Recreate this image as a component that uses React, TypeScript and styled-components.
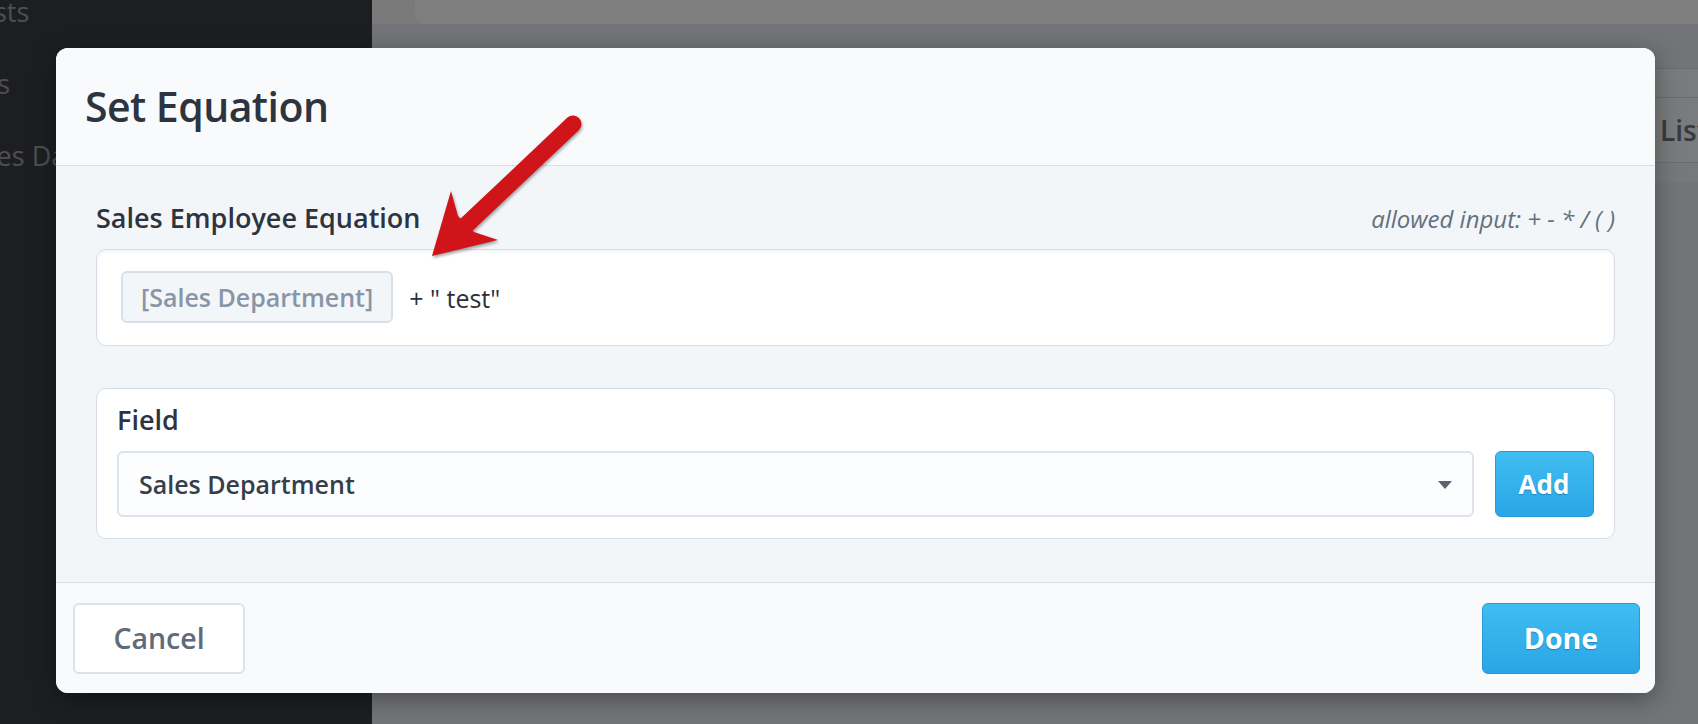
import React from "react";
import styled, { createGlobalStyle } from "styled-components";

const GlobalStyle = createGlobalStyle`
  html, body { margin: 0; padding: 0; }
  body {
    font-family: "Open Sans", "Noto Sans", Arial, sans-serif;
    width: 1698px;
    height: 724px;
    overflow: hidden;
  }
  * { box-sizing: border-box; }
`;

const Page = styled.div`
  position: relative;
  width: 1698px;
  height: 724px;
  display: flex;
  overflow: hidden;
`;

const Sidebar = styled.nav`
  width: 372px;
  flex: 0 0 372px;
  background: #3a3c42;
  display: flex;
  flex-direction: column;
  gap: 38px;
  margin-top: -5px;
  overflow: hidden;
`;

const SideItem = styled.div<{ $shift: number }>`
  font-size: 27px;
  line-height: 34px;
  color: #9c9ea5;
  white-space: nowrap;
  margin-left: ${(p) => -p.$shift}px;
`;

const Main = styled.main`
  flex: 1;
  background: #e6e9ee;
  display: flex;
  flex-direction: column;
  overflow: hidden;
`;

const TopBar = styled.div`
  height: 24px;
  background: #f4f4f4;
  padding-left: 43px;
  display: flex;
`;

const TopCard = styled.div`
  flex: 1;
  background: #ffffff;
  border-radius: 0 0 0 10px;
`;

const Panel = styled.section`
  margin-top: 44px;
  background: #f5f6f8;
  display: flex;
  flex-direction: column;
  border-top: 1px solid #d5d9df;
`;

const PanelStrip = styled.div`
  height: 29px;
  border-bottom: 1px solid #d5d9df;
`;

const PanelToolbar = styled.div`
  height: 65px;
  display: flex;
  align-items: center;
  border-bottom: 1px solid #d5d9df;
`;

const ToolbarSpacer = styled.div`
  flex: 0 0 1288px;
`;

const ToolbarText = styled.span`
  font-size: 28px;
  font-weight: 600;
  color: #70757e;
  white-space: nowrap;
`;

const PanelFoot = styled.div`
  height: 20px;
  background: #eef0f3;
`;

const Overlay = styled.div`
  position: absolute;
  inset: 0;
  background: rgba(0, 0, 0, 0.5);
  display: flex;
  align-items: flex-start;
  padding: 48px 43px 0 56px;
`;

const Modal = styled.div`
  width: 1600px;
  border-radius: 12px;
  overflow: hidden;
  background: #f9fafc;
  box-shadow: 0 6px 24px rgba(0, 0, 0, 0.35);
  display: flex;
  flex-direction: column;
`;

const Header = styled.header`
  height: 117.5px;
  border-bottom: 1.5px solid #d8dfe7;
  background: #f9fafc;
  display: flex;
  align-items: center;
  padding-left: 29px;
`;

const Title = styled.h1`
  margin: 0;
  font-size: 41px;
  line-height: 50px;
  font-weight: 600;
  color: #2d3440;
  letter-spacing: -0.55px;
`;

const Body = styled.div`
  background: #f3f6f9;
  padding: 35px 40px 43px 40px;
  display: flex;
  flex-direction: column;
`;

const LabelRow = styled.div`
  height: 34px;
  display: flex;
  justify-content: space-between;
  align-items: baseline;
  margin-bottom: 14px;
`;

const Label = styled.div`
  font-size: 27px;
  line-height: 34px;
  font-weight: 600;
  color: #2d3440;
`;

const Hint = styled.span`
  font-size: 24px;
  line-height: 34px;
  font-style: italic;
  color: #64707e;
`;

const EquationBox = styled.div`
  height: 97px;
  background: #ffffff;
  border: 1.5px solid #d6dde6;
  border-radius: 10px;
  box-shadow: inset 0 2px 3px rgba(20, 40, 70, 0.05);
  display: flex;
  align-items: center;
  padding-left: 24px;
  gap: 16px;
`;

const Token = styled.span`
  height: 52px;
  display: inline-flex;
  align-items: center;
  padding: 0 18px;
  background: #f3f6f9;
  border: 2px solid #d8dfe7;
  border-radius: 6px;
  font-size: 25px;
  font-weight: 600;
  color: #8795a6;
`;

const EqText = styled.span`
  font-size: 25px;
  color: #2b313a;
  white-space: pre;
  margin-top: 2px;
`;

const FieldCard = styled.div`
  margin-top: 42px;
  height: 151px;
  background: #ffffff;
  border: 1.5px solid #d6dde6;
  border-radius: 10px;
  padding: 14px 20.5px 0 20px;
  display: flex;
  flex-direction: column;
`;

const FieldLabel = styled(Label)`
  margin-bottom: 14px;
`;

const FieldRow = styled.div`
  display: flex;
  gap: 21px;
`;

const Select = styled.div`
  flex: 1;
  height: 66px;
  background: #fcfdfe;
  border: 2px solid #dde3ea;
  border-radius: 6px;
  display: flex;
  align-items: center;
  justify-content: space-between;
  padding: 0 20px 0 20px;
  font-size: 25px;
  font-weight: 600;
  color: #363e4a;
`;

const Caret = styled.span`
  width: 0;
  height: 0;
  border-left: 7.5px solid transparent;
  border-right: 7.5px solid transparent;
  border-top: 8px solid #5b6270;
  margin-top: 2px;
`;

const BlueButton = styled.button<{ $w: number; $h: number; $fs: number }>`
  width: ${(p) => p.$w}px;
  height: ${(p) => p.$h}px;
  flex: 0 0 auto;
  background: linear-gradient(#40bdf1, #2aa5e6);
  border: 1.5px solid #2a9ad7;
  border-radius: 6px;
  color: #ffffff;
  font-family: "Open Sans", "Noto Sans", Arial, sans-serif;
  font-size: ${(p) => p.$fs}px;
  font-weight: 700;
  text-shadow: 0 1px 1px rgba(0, 60, 110, 0.35);
  display: flex;
  align-items: center;
  justify-content: center;
  padding: 0;
  cursor: pointer;
`;

const Footer = styled.footer`
  background: #f9fafc;
  border-top: 1.5px solid #d8dfe7;
  padding: 20px 15px 19px 17px;
  display: flex;
  justify-content: space-between;
  align-items: center;
`;

const GhostButton = styled.button`
  width: 172px;
  height: 71px;
  background: #ffffff;
  border: 2px solid #dbe2ea;
  border-radius: 6px;
  color: #5f6b7a;
  font-family: "Open Sans", "Noto Sans", Arial, sans-serif;
  font-size: 28.5px;
  font-weight: 600;
  padding: 0;
  cursor: pointer;
`;

const ArrowLayer = styled.svg`
  position: absolute;
  left: 0;
  top: 0;
  width: 1698px;
  height: 724px;
  pointer-events: none;
  filter: drop-shadow(1px 2px 1.5px rgba(0, 0, 0, 0.35));
`;

function Arrow() {
  return (
    <ArrowLayer viewBox="0 0 1698 724">
      <line
        x1="573"
        y1="124"
        x2="463"
        y2="228"
        stroke="#d0151a"
        strokeWidth="17"
        strokeLinecap="round"
      />
      <polygon
        points="432,256 451,191 458,216 474,232 498,240"
        fill="#d0151a"
      />
    </ArrowLayer>
  );
}

export default function App() {
  return (
    <>
      <GlobalStyle />
      <Page>
        <Sidebar>
          <SideItem $shift={27}>Lists</SideItem>
          <SideItem $shift={69}>Forms</SideItem>
          <SideItem $shift={40}>Sales Data</SideItem>
        </Sidebar>
        <Main>
          <TopBar>
            <TopCard />
          </TopBar>
          <Panel>
            <PanelStrip />
            <PanelToolbar>
              <ToolbarSpacer />
              <ToolbarText>List</ToolbarText>
            </PanelToolbar>
            <PanelFoot />
          </Panel>
        </Main>
        <Overlay>
          <Modal>
            <Header>
              <Title>Set Equation</Title>
            </Header>
            <Body>
              <LabelRow>
                <Label>Sales Employee Equation</Label>
                <Hint>allowed input: + - * / ( )</Hint>
              </LabelRow>
              <EquationBox>
                <Token>[Sales Department]</Token>
                <EqText>+ " test"</EqText>
              </EquationBox>
              <FieldCard>
                <FieldLabel>Field</FieldLabel>
                <FieldRow>
                  <Select>
                    Sales Department
                    <Caret />
                  </Select>
                  <BlueButton $w={99} $h={66} $fs={26}>
                    Add
                  </BlueButton>
                </FieldRow>
              </FieldCard>
            </Body>
            <Footer>
              <GhostButton>Cancel</GhostButton>
              <BlueButton $w={158} $h={71} $fs={28.5}>
                Done
              </BlueButton>
            </Footer>
          </Modal>
        </Overlay>
        <Arrow />
      </Page>
    </>
  );
}
